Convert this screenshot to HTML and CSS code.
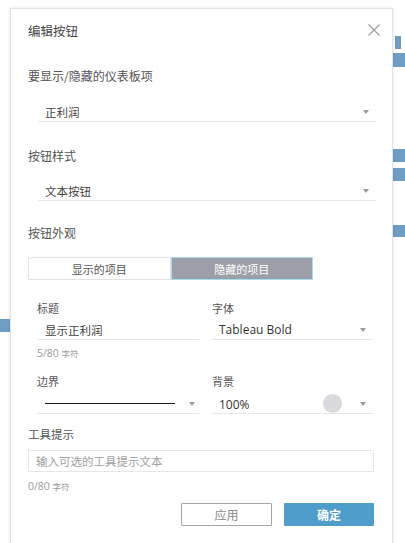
FILE: index.html
```html
<!DOCTYPE html>
<html lang="zh">
<head>
<meta charset="utf-8">
<link rel="stylesheet" href="styles.css">
</head>
<body>
<div class="bg-block b1"></div>
<div class="bg-block b2"></div>
<div class="bg-block b3"></div>
<div class="bg-block b4"></div>
<div class="bg-block b5"></div>
<div class="bg-block b6"></div>

<div class="dialog">
  <div class="header">
    <span class="title">编辑按钮</span>
    <svg class="close" width="12" height="12" viewBox="0 0 12 12"><path d="M0.5 0.5L11.5 11.5M11.5 0.5L0.5 11.5" stroke="#9a9a9a" stroke-width="1.1" fill="none"/></svg>
  </div>

  <div class="label l1">要显示/隐藏的仪表板项</div>
  <div class="select s1"><span>正利润</span><span class="caret"></span></div>

  <div class="label l2">按钮样式</div>
  <div class="select s2"><span>文本按钮</span><span class="caret"></span></div>

  <div class="label l3">按钮外观</div>
  <div class="segmented">
    <div class="seg">显示的项目</div>
    <div class="seg active">隐藏的项目</div>
  </div>

  <div class="grid">
    <div class="sublabel r1">标题</div>
    <div class="sublabel r1">字体</div>
    <div class="field">显示正利润</div>
    <div class="field select-sm"><span class="latin">Tableau Bold</span><span class="caret"></span></div>
    <div class="count">5/80 <span class="cj">字符</span></div>
    <div></div>
    <div class="sublabel r2">边界</div>
    <div class="sublabel r2">背景</div>
    <div class="field select-sm border-field"><span class="line"></span><span class="caret"></span></div>
    <div class="field select-sm bg-field"><span class="latin">100%</span><span class="swatch"></span><span class="caret"></span></div>
  </div>

  <div class="label l4">工具提示</div>
  <div class="text-input">输入可选的工具提示文本</div>
  <div class="count c2">0/80 <span class="cj">字符</span></div>

  <div class="actions">
    <div class="btn secondary">应用</div>
    <div class="btn primary">确定</div>
  </div>
</div>
</body>
</html>
```

FILE: styles.css
```css
html, body {
  margin: 0;
  padding: 0;
  background: #ffffff;
  overflow: hidden;
}
body {
  width: 405px;
  height: 543px;
  position: relative;
  font-family: "Noto Sans CJK SC", "Noto Sans", sans-serif;
  color: #4a4a4a;
}
.bg-block {
  position: absolute;
  background: #6e9dc4;
}
.b1 { left: 395px; top: 36px; width: 6px; height: 13px; }
.b2 { left: 392px; top: 53px; width: 13px; height: 14px; }
.b3 { left: 392px; top: 149px; width: 13px; height: 13px; }
.b4 { left: 392px; top: 168px; width: 13px; height: 13px; }
.b5 { left: 392px; top: 225px; width: 13px; height: 12px; }
.b6 { left: 0; top: 319px; width: 10px; height: 13px; }

.dialog {
  position: relative;
  z-index: 1;
  margin: 8px 0 0 10px;
  width: 383px;
  height: 540px;
  box-sizing: border-box;
  border: 1px solid #e4e4e4;
  border-bottom: none;
  background: #fff;
  box-shadow: 0 0 3px rgba(0, 0, 0, 0.12);
  padding: 0 16px 0 17px;
}
.header {
  height: 43px;
  display: flex;
  align-items: center;
  justify-content: space-between;
}
.title {
  font-size: 12.5px;
  line-height: 16px;
  color: #444;
}
.close {
  margin-right: -4px;
  margin-top: -2px;
}
.label {
  font-size: 12px;
  line-height: 20px;
  height: 20px;
  color: #555;
}
.l1 { margin-top: 14px; }
.l2 { margin-top: 24px; }
.l3 { margin-top: 22px; }
.l4 { margin-top: 12px; font-size: 11.5px; line-height: 16px; height: 16px; }

.select {
  margin-left: 10px;
  height: 18px;
  border-bottom: 1px solid #e6e6e6;
  display: flex;
  align-items: center;
  justify-content: space-between;
  padding: 0 7px;
  font-size: 11.5px;
  color: #444;
}
.s1 { margin-top: 17px; }
.s2 { margin-top: 16px; }

.caret {
  width: 0;
  height: 0;
  border-left: 3.5px solid transparent;
  border-right: 3.5px solid transparent;
  border-top: 4px solid #9a9a9a;
  flex: none;
}

.segmented {
  margin-top: 14px;
  display: flex;
  height: 23px;
  width: 285px;
}
.seg {
  flex: 1;
  box-sizing: border-box;
  display: flex;
  align-items: center;
  justify-content: center;
  font-size: 11px;
  color: #555;
  border: 1px solid #e2e2e2;
  background: #fff;
}
.seg.active {
  background: #9c9fa7;
  border: 1px solid #a9dcee;
  color: #fff;
}

.grid {
  margin: 0 2px 0 9px;
  display: grid;
  grid-template-columns: 162px 161px;
  column-gap: 13px;
}
.sublabel {
  font-size: 11px;
  line-height: 16px;
  height: 16px;
  color: #555;
}
.r1 { margin-top: 20px; }
.r2 { margin-top: 13px; }
.field {
  margin-top: 5px;
  height: 18px;
  border-bottom: 1px solid #e6e6e6;
  padding: 0 8px;
  font-size: 11.5px;
  line-height: 18px;
  color: #444;
  display: flex;
  align-items: center;
}
.select-sm {
  justify-content: space-between;
  padding: 0 7px;
}
.latin {
  font-family: "Open Sans", "Noto Sans", sans-serif;
  font-size: 12px;
  color: #333;
}
.border-field {
  height: 19px;
  padding: 0 4px 0 8px;
}
.border-field .line {
  width: 130px;
  height: 1.5px;
  background: #1a1a1a;
}
.bg-field {
  height: 19px;
}
.bg-field .swatch {
  width: 19px;
  height: 19px;
  border-radius: 50%;
  background: #d9d9de;
  margin-left: auto;
  margin-right: 18px;
}
.bg-field .latin {
  margin-top: 2px;
}
.count {
  margin-top: 6px;
  height: 14px;
  line-height: 14px;
  font-size: 10.5px;
  color: #9a9a9a;
  font-family: "Open Sans", "Noto Sans", sans-serif;
}
.count .cj {
  font-family: "Noto Sans CJK SC", sans-serif;
  font-size: 8.5px;
}
.c2 { margin-top: 7px; }

.text-input {
  margin: 8px 2px 0 0;
  height: 22px;
  box-sizing: border-box;
  border: 1px solid #e6e6e6;
  padding-left: 7px;
  display: flex;
  align-items: center;
  font-size: 11.5px;
  color: #a0a0a0;
}

.actions {
  margin: 10px 2px 0 0;
  display: flex;
  justify-content: flex-end;
  gap: 12px;
}
.btn {
  height: 23px;
  box-sizing: border-box;
  display: flex;
  align-items: center;
  justify-content: center;
  font-size: 12px;
}
.secondary {
  width: 91px;
  border: 1px solid #a6a6a6;
  color: #8a8a8a;
  background: #fff;
  border-radius: 1px;
}
.primary {
  width: 90px;
  background: #4e9dca;
  color: #fff;
  font-weight: bold;
  border-radius: 1px;
}
```
